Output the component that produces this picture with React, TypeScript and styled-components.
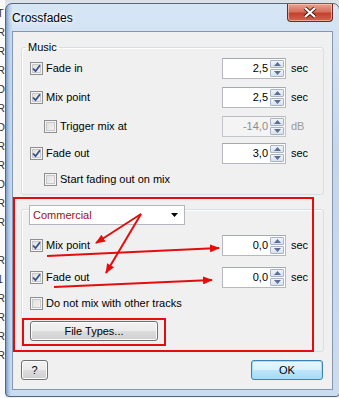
import styled, { createGlobalStyle } from "styled-components";

const GlobalStyle = createGlobalStyle`
  body {
    margin: 0;
    background: #e6edf5;
    font-family: "Liberation Sans", Arial, sans-serif;
    font-size: 11px;
    line-height: 13px;
    color: #000;
  }
`;

const Screen = styled.div`
  position: relative;
  display: flex;
  width: 339px;
  height: 398px;
  overflow: hidden;
  background: linear-gradient(#d9dfe6, #eef1f5 12px);
`;

const BackStrip = styled.div`
  flex: 0 0 5px;
  overflow: hidden;
  background: #fbfbfb;
  display: flex;
  flex-direction: column;
  padding-top: 4px;
  font-size: 11px;
  line-height: 19px;
  color: #333;
  text-indent: -3px;
`;

const Window = styled.div`
  flex: 0 0 335px;
  height: 394px;
  margin-top: 3px;
  box-sizing: border-box;
  border: 1px solid #55667b;
  border-radius: 7px 7px 4px 4px;
  padding: 0 6px 6px 6px;
  display: flex;
  flex-direction: column;
  background:
    linear-gradient(90deg, #7d9cc4 0, #b4cbe6 3px, #cddff2 6px) left / 6px 100% no-repeat,
    linear-gradient(#d7e6f5, #c2d6ed 40%, #cadcf0);
`;

const TitleBar = styled.div`
  height: 27px;
  display: flex;
  align-items: flex-start;
  justify-content: space-between;
`;

const Title = styled.div`
  font-size: 12px;
  line-height: 14px;
  margin-top: 7px;
  color: #000;
  text-shadow: 0 0 6px #fff, 0 0 3px #fff;
`;

const CloseButton = styled.div`
  width: 46px;
  height: 18px;
  box-sizing: border-box;
  border: 1px solid #6e2a22;
  border-top: none;
  border-radius: 0 0 4px 4px;
  background: linear-gradient(#e8a392 0, #d5705c 45%, #c3412c 55%, #d0664e 100%);
  box-shadow: inset 0 0 0 1px rgba(255, 210, 200, 0.6);
  display: flex;
  align-items: center;
  justify-content: center;
`;

const Client = styled.div`
  flex: 1;
  box-sizing: border-box;
  border: 1px solid #8497ad;
  background: #f0f0f0;
  padding: 9px 8px 7px 8px;
  display: flex;
  flex-direction: column;
`;

const GroupBox = styled.fieldset`
  margin: 0;
  padding: 4px 7px 4px 8px;
  border: 1px solid #d5dfe5;
  border-radius: 3px;
  box-shadow: inset 1px 1px 0 #fff;
`;

const Legend = styled.legend`
  padding: 0 2px;
  margin-left: -4px;
  line-height: 13px;
`;

const Panel = styled.div`
  margin-top: 14px;
  padding: 0 7px 10px 8px;
  border: 1px solid #d5dfe5;
  border-radius: 3px;
  box-shadow: inset 1px 1px 0 #fff;
  display: flex;
  flex-direction: column;
`;

const Row = styled.div<{ $mt?: number }>`
  height: 21px;
  margin-top: ${(p) => p.$mt ?? 0}px;
  display: grid;
  grid-template-columns: 1fr 64px 30px;
  align-items: center;
`;

const CheckLabel = styled.label<{ $indent?: boolean; $disabled?: boolean }>`
  display: flex;
  align-items: center;
  gap: 3px;
  margin-left: ${(p) => (p.$indent ? 14 : 0)}px;
  white-space: nowrap;
  color: ${(p) => (p.$disabled ? "#8d8d8d" : "#000")};
`;

const Box = styled.span`
  width: 13px;
  height: 13px;
  box-sizing: border-box;
  border: 1px solid #8e8f8f;
  background: linear-gradient(135deg, #dcdcdc, #f6f6f6);
  box-shadow: inset 0 0 0 1px #f4f4f4, inset 0 0 0 2px #c9c9c9;
  display: flex;
  align-items: center;
  justify-content: center;
  flex-shrink: 0;
`;

const Spin = styled.div<{ $disabled?: boolean }>`
  height: 21px;
  box-sizing: border-box;
  border: 1px solid ${(p) => (p.$disabled ? "#c4c6cb" : "#b6b9c0")};
  border-top-color: ${(p) => (p.$disabled ? "#b8bbc0" : "#a4a8b0")};
  background: ${(p) => (p.$disabled ? "#f4f4f4" : "#fff")};
  display: flex;
  align-items: center;
  padding: 1px;
`;

const SpinValue = styled.span<{ $disabled?: boolean }>`
  flex: 1;
  text-align: right;
  padding-right: 2px;
  color: ${(p) => (p.$disabled ? "#8d8d8d" : "#000")};
`;

const SpinArrows = styled.div`
  width: 14px;
  height: 17px;
  display: flex;
  flex-direction: column;
  gap: 1px;
`;

const SpinButton = styled.div`
  flex: 1;
  box-sizing: border-box;
  border: 1px solid #a9b3c4;
  border-radius: 1px;
  background: linear-gradient(#f2f5f9, #d9e1ec);
  display: flex;
  align-items: center;
  justify-content: center;
`;

const Unit = styled.span<{ $disabled?: boolean }>`
  padding-left: 5px;
  color: ${(p) => (p.$disabled ? "#9a9a9a" : "#000")};
`;

const Combo = styled.div`
  width: 156px;
  height: 20px;
  margin: -5px 0 0 -1px;
  box-sizing: border-box;
  border: 1px solid #b3b6bc;
  background: #fff;
  display: flex;
  align-items: center;
  justify-content: space-between;
  padding: 0 6px 0 3px;
  color: #a01010;
`;

const SingleRow = styled.div<{ $mt?: number }>`
  height: 21px;
  margin-top: ${(p) => p.$mt ?? 0}px;
  display: flex;
  align-items: center;
`;

const Button = styled.div<{ $width: number; $default?: boolean }>`
  width: ${(p) => p.$width}px;
  height: 20px;
  box-sizing: border-box;
  border: 1px solid ${(p) => (p.$default ? "#3c7fb1" : "#707070")};
  border-radius: 3px;
  background: ${(p) =>
    p.$default
      ? "linear-gradient(#eaf6fd 0, #d9f0fc 50%, #bee6fd 50%, #a7d9f5 100%)"
      : "linear-gradient(#f2f2f2 0, #ebebeb 50%, #dddddd 50%, #cfcfcf 100%)"};
  box-shadow: inset 0 0 0 1px ${(p) => (p.$default ? "#9fe0fb" : "#fcfcfc")};
  display: flex;
  align-items: center;
  justify-content: center;
`;

const FileTypes = styled(Button)`
  margin-top: 7px;
`;

const ButtonBar = styled.div`
  margin-top: 8px;
  padding-right: 1px;
  display: flex;
  justify-content: space-between;
`;

const Overlay = styled.svg`
  position: absolute;
  left: 0;
  top: 0;
  pointer-events: none;
`;

function Check({ checked }: { checked?: boolean }) {
  return (
    <Box>
      {checked && (
        <svg width="9" height="9" viewBox="0 0 9 9">
          <path d="M1 4.5 L3.5 7.2 L8 1.2" fill="none" stroke="#34518f" strokeWidth="1.8" />
        </svg>
      )}
    </Box>
  );
}

function Arrow({ up }: { up?: boolean }) {
  return (
    <svg width="7" height="4" viewBox="0 0 7 4">
      <path d={up ? "M0 4 L3.5 0 L7 4 Z" : "M0 0 L3.5 4 L7 0 Z"} fill="#5a6f93" />
    </svg>
  );
}

function SpinBox({ value, disabled }: { value: string; disabled?: boolean }) {
  return (
    <Spin $disabled={disabled}>
      <SpinValue $disabled={disabled}>{value}</SpinValue>
      <SpinArrows>
        <SpinButton>
          <Arrow up />
        </SpinButton>
        <SpinButton>
          <Arrow />
        </SpinButton>
      </SpinArrows>
    </Spin>
  );
}

const letters = ["T", "R", "R", "R", "D", "R", "D", "R", "R", "D", "R", "R", "I", "R", "1", "R", "R", "R", "R"];

export default function App() {
  return (
    <>
      <GlobalStyle />
      <Screen>
        <BackStrip>
          {letters.map((l, i) => (
            <span key={i}>{l}</span>
          ))}
        </BackStrip>
        <Window>
          <TitleBar>
            <Title>Crossfades</Title>
            <CloseButton>
              <svg width="14" height="11" viewBox="0 0 14 11">
                <path d="M2 1 L12 10 M12 1 L2 10" stroke="#4a1a14" strokeWidth="4" />
                <path d="M2 1 L12 10 M12 1 L2 10" stroke="#fff" strokeWidth="2.2" />
              </svg>
            </CloseButton>
          </TitleBar>
          <Client>
            <GroupBox>
              <Legend>Music</Legend>
              <Row>
                <CheckLabel>
                  <Check checked />
                  Fade in
                </CheckLabel>
                <SpinBox value="2,5" />
                <Unit>sec</Unit>
              </Row>
              <Row $mt={8}>
                <CheckLabel>
                  <Check checked />
                  Mix point
                </CheckLabel>
                <SpinBox value="2,5" />
                <Unit>sec</Unit>
              </Row>
              <Row $mt={8}>
                <CheckLabel $indent>
                  <Check />
                  Trigger mix at
                </CheckLabel>
                <SpinBox value="-14,0" disabled />
                <Unit $disabled>dB</Unit>
              </Row>
              <Row $mt={6}>
                <CheckLabel>
                  <Check checked />
                  Fade out
                </CheckLabel>
                <SpinBox value="3,0" />
                <Unit>sec</Unit>
              </Row>
              <Row $mt={5}>
                <CheckLabel $indent>
                  <Check />
                  Start fading out on mix
                </CheckLabel>
              </Row>
            </GroupBox>

            <Panel>
              <Combo>
                Commercial
                <svg width="7" height="4" viewBox="0 0 7 4">
                  <path d="M0 0 L7 0 L3.5 4 Z" fill="#000" />
                </svg>
              </Combo>
              <Row $mt={10}>
                <CheckLabel>
                  <Check checked />
                  Mix point
                </CheckLabel>
                <SpinBox value="0,0" />
                <Unit>sec</Unit>
              </Row>
              <Row $mt={11}>
                <CheckLabel>
                  <Check checked />
                  Fade out
                </CheckLabel>
                <SpinBox value="0,0" />
                <Unit>sec</Unit>
              </Row>
              <SingleRow $mt={5}>
                <CheckLabel>
                  <Check />
                  Do not mix with other tracks
                </CheckLabel>
              </SingleRow>
              <FileTypes $width={128}>File Types...</FileTypes>
            </Panel>

            <ButtonBar>
              <Button $width={27}>?</Button>
              <Button $width={72} $default>
                OK
              </Button>
            </ButtonBar>
          </Client>
        </Window>
        <Overlay width="339" height="398" viewBox="0 0 339 398">
          <defs>
            <marker id="head" markerWidth="10" markerHeight="8" refX="9" refY="4" orient="auto" markerUnits="userSpaceOnUse">
              <path d="M0 0 L10 4 L0 8 Z" fill="#e40d0d" />
            </marker>
          </defs>
          <g stroke="#e40d0d" fill="none" strokeWidth="2">
            <rect x="14" y="198" width="299" height="153" />
            <rect x="23" y="319" width="142" height="26" />
            <path d="M141 214 L96 243" markerEnd="url(#head)" />
            <path d="M141 214 L106 273" markerEnd="url(#head)" />
            <path d="M47 256 L219 248" markerEnd="url(#head)" />
            <path d="M54 287 L212 280" markerEnd="url(#head)" />
          </g>
        </Overlay>
      </Screen>
    </>
  );
}
